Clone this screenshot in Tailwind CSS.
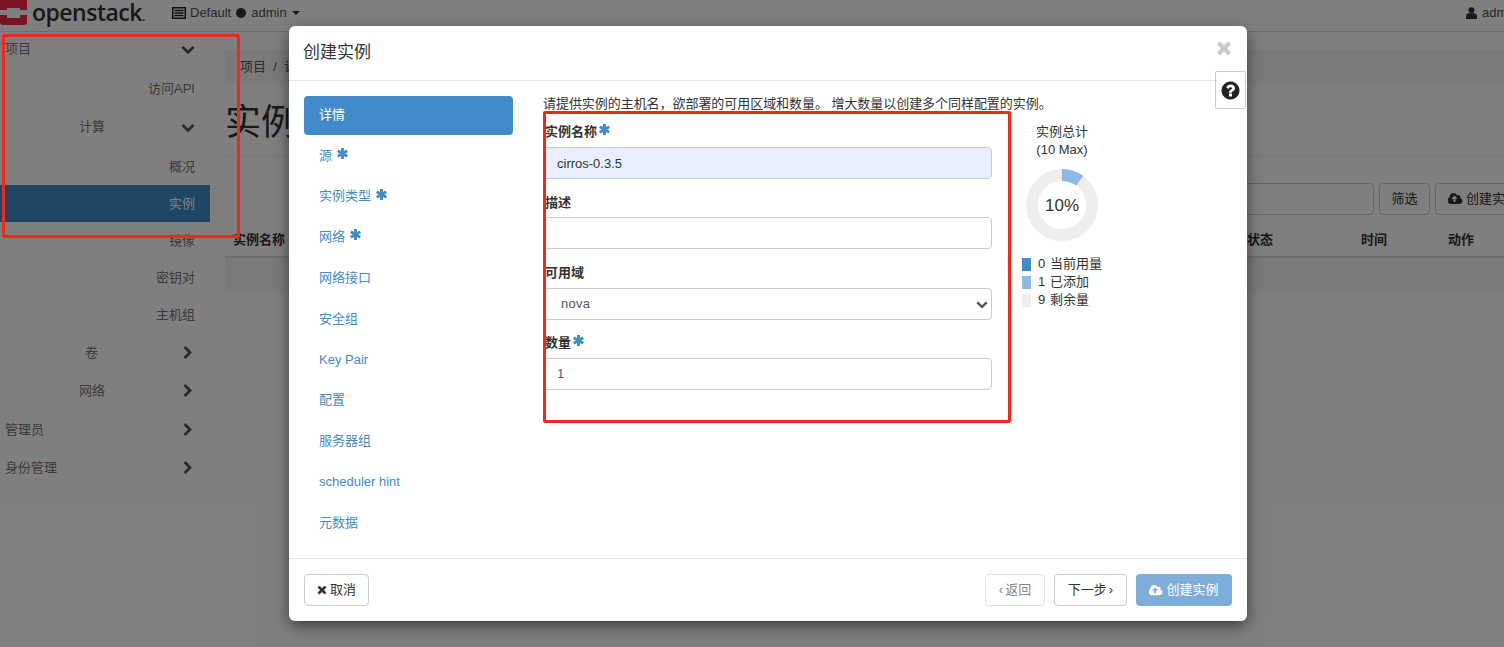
<!DOCTYPE html>
<html lang="en">
<head>
    <meta charset="UTF-8">
    <title>创建实例</title>
    <script src="https://cdn.jsdelivr.net/npm/@tailwindcss/browser@4"></script>
</head>
<body class="bg-white text-[#333] font-['Liberation_Sans','Noto_Sans_CJK_SC',sans-serif] text-[13px]">

<svg class="hidden">
    <symbol id="chev-down" viewBox="0 0 1792 1792"><path d="M1683 808l-742 741q-19 19-45 19t-45-19l-742-741q-19-19-19-45.5t19-45.5l166-165q19-19 45-19t45 19l531 531 531-531q19-19 45-19t45 19l166 165q19 19 19 45.5t-19 45.5z"/></symbol>
    <symbol id="chev-right" viewBox="0 0 1792 1792"><path d="M1363 877l-742 742q-19 19-45 19t-45-19l-166-166q-19-19-19-45t19-45l531-531-531-531q-19-19-19-45t19-45l166-166q19-19 45-19t45 19l742 742q19 19 19 45t-19 45z"/></symbol>
    <symbol id="cloud" viewBox="0 0 1920 1792"><path d="M1216 864q0-14-9-23l-352-352q-9-9-23-9t-23 9l-351 351q-10 12-10 24 0 14 9 23t23 9h224v352q0 13 9.5 22.5t22.5 9.5h192q13 0 22.5-9.5t9.5-22.5v-352h224q13 0 22.5-9.5t9.5-22.5zm640 288q0 159-112.5 271.5t-271.5 112.5h-1088q-185 0-316.5-131.5t-131.5-316.5q0-130 70-240t188-165q-2-30-2-43 0-212 150-362t362-150q156 0 285.5 87t188.5 231q71-62 166-62 106 0 181 75t75 181q0 76-41 138 130 31 213.5 135.5t83.5 238.5z"/></symbol>
    <symbol id="times" viewBox="0 0 1408 1792"><path d="M1298 1202q0 40-28 68l-136 136q-28 28-68 28t-68-28l-294-294-294 294q-28 28-68 28t-68-28l-136-136q-28-28-28-68t28-68l294-294-294-294q-28-28-28-68t28-68l136-136q28-28 68-28t68 28l294 294 294-294q28-28 68-28t68 28l136 136q28 28 28 68t-28 68l-294 294 294 294q28 28 28 68z"/></symbol>
    <symbol id="star" viewBox="0 0 12 12"><path d="M6 0v12M.8 3l10.4 6M11.200 3L.8 9" stroke="#428bca" stroke-width="3.2" fill="none"/></symbol>
</svg>

<div class="relative w-[1504px] h-[647px] overflow-hidden">

    <!-- page behind the dialog -->
    <div class="h-[32px] border-b border-[#ddd] bg-white flex items-center overflow-hidden">
        <svg class="w-[27px] h-[25px] -mt-[7px] shrink-0" viewBox="0 0 27 25">
            <path fill="#f4284a" d="M3 -6h21a3 3 0 0 1 3 3v13h-7V8H7v2H0V-3a3 3 0 0 1 3-3zM0 15h7v3h13v-3h7v7a3 3 0 0 1-3 3H3a3 3 0 0 1-3-3z"/>
        </svg>
        <span class="ml-[5px] w-[140px] -mt-[7px] font-['Open_Sans'] font-semibold text-[23px] leading-none text-[#333] tracking-[-0.5px]">openstack<span class="text-[12px]">.</span></span>
        <svg class="w-[14px] h-[12px] mr-[4px] -mt-[6px]" viewBox="0 0 14 12"><path fill="none" stroke="#222" stroke-width="1.5" d="M.75.75h12.500v10.500H.75z"/><path stroke="#222" stroke-width="1.400" d="M2.500 3.500h9M2.500 6h9M2.500 8.500h9"/></svg>
        <span class="-mt-[6px] text-[#555]">Default</span>
        <span class="-mt-[6px] ml-[5px] w-[10px] h-[10px] rounded-full bg-[#333]"></span>
        <span class="-mt-[6px] ml-[5px] text-[#555]">admin</span>
        <span class="-mt-[6px] ml-[5px] border-x-[4px] border-x-transparent border-t-[4px] border-t-[#333]"></span>
        <span class="-mt-[6px] ml-auto w-[38px] overflow-hidden whitespace-nowrap text-[#555] flex items-center gap-[5px]">
            <svg class="w-[11px] h-[12px] shrink-0 fill-[#333]" viewBox="0 0 11 12"><circle cx="5.500" cy="3.200" r="3"/><path d="M0 12V9.500C0 7.500 1.500 6.300 3 6.300h5c1.500 0 3 1.200 3 3.200V12z"/></svg>admin</span>
    </div>

    <div class="flex">
        <!-- sidebar -->
        <nav class="w-[210px] shrink-0 text-[#777]">
            <div class="h-[38px] -mt-[2px] pl-[5px] pr-[15px] flex items-center justify-between"><span>项目</span><svg class="w-[14px] h-[14px] fill-[#555]"><use href="#chev-down"/></svg></div>
            <div class="h-[38px] mt-[2px] pr-[15px] flex items-center justify-end">访问API</div>
            <div class="h-[38px] pl-[79px] pr-[15px] flex items-center justify-between"><span>计算</span><svg class="w-[14px] h-[14px] fill-[#555]"><use href="#chev-down"/></svg></div>
            <div class="h-[37px] mt-[2px] pr-[15px] flex items-center justify-end">概况</div>
            <div class="h-[37px] pr-[15px] flex items-center justify-end bg-[#3f8cc9] text-white">实例</div>
            <div class="h-[37px] pr-[15px] flex items-center justify-end">镜像</div>
            <div class="h-[37px] pr-[15px] flex items-center justify-end">密钥对</div>
            <div class="h-[37px] pr-[15px] flex items-center justify-end">主机组</div>
            <div class="h-[38px] mt-[1px] pl-[85px] pr-[15px] flex items-center justify-between"><span>卷</span><svg class="w-[14px] h-[14px] fill-[#555]"><use href="#chev-right"/></svg></div>
            <div class="h-[38px] pl-[79px] pr-[15px] flex items-center justify-between"><span>网络</span><svg class="w-[14px] h-[14px] fill-[#555]"><use href="#chev-right"/></svg></div>
            <div class="h-[38px] mt-[1px] pl-[5px] pr-[15px] flex items-center justify-between"><span>管理员</span><svg class="w-[14px] h-[14px] fill-[#555]"><use href="#chev-right"/></svg></div>
            <div class="h-[38px] pl-[5px] pr-[15px] flex items-center justify-between"><span>身份管理</span><svg class="w-[14px] h-[14px] fill-[#555]"><use href="#chev-right"/></svg></div>
        </nav>

        <!-- main content -->
        <main class="flex-1 pl-[15px] pt-[18px]">
            <div class="h-[33px] bg-[#f5f5f5] pl-[15px] flex items-center text-[#555]">项目&nbsp;&nbsp;/&nbsp;&nbsp;计算</div>
            <h1 class="mt-[16px] h-[58px] border-b border-[#eee] text-[36px] leading-[48px] font-normal text-[#333]">实例</h1>
            <div class="mt-[26px] flex justify-end gap-[5px] -mr-[40px]">
                <div class="w-[400px] h-[32px] border border-[#ccc] rounded-[4px]"></div>
                <div class="w-[51px] h-[32px] border border-[#ccc] rounded-[4px] flex items-center justify-center">筛选</div>
                <div class="w-[109px] h-[32px] border border-[#ccc] rounded-[4px] flex items-center pl-[12px] gap-[3px] whitespace-nowrap"><svg class="w-[15px] h-[14px] fill-[#333]"><use href="#cloud"/></svg>创建实例</div>
            </div>
            <div class="mt-[8px] h-[35px] border-b-2 border-[#ddd] grid grid-cols-[1014px_114px_87px_1fr] items-center font-bold pl-[8px]">
                <span>实例名称</span><span>状态</span><span>时间</span><span>动作</span>
            </div>
            <div class="h-[33px] bg-[#f5f5f5]"></div>
        </main>
    </div>

    <!-- backdrop -->
    <div class="absolute inset-0 bg-black/50"></div>

    <!-- dialog -->
    <div class="absolute left-[289px] top-[26px] w-[958px] h-[595px] bg-white rounded-[6px] shadow-[0_5px_15px_rgba(0,0,0,0.5)] flex flex-col">
        <div class="h-[55px] shrink-0 border-b border-[#e5e5e5] pl-[14px] pr-[15px] flex items-center justify-between">
            <h4 class="text-[17px] text-[#333] font-normal">创建实例</h4>
            <svg class="w-[16px] h-[20px] -mt-[8px] fill-[#c9c9c9]"><use href="#times"/></svg>
        </div>

        <div class="flex-1 flex pt-[15px] pl-[15px] relative">
            <!-- wizard steps -->
            <ul class="w-[209px] shrink-0 flex flex-col gap-[1.8px] text-[#428bca]">
                <li class="h-[39px] pl-[15px] pb-[2px] flex items-center rounded-[4px] bg-[#428bca] text-white">详情</li>
                <li class="h-[39px] pl-[15px] pb-[2px] flex items-center gap-[4.5px]">源 <svg class="w-[11px] h-[11px] -mt-[4px]"><use href="#star"/></svg></li>
                <li class="h-[39px] pl-[15px] pb-[2px] flex items-center gap-[4.5px]">实例类型 <svg class="w-[11px] h-[11px] -mt-[4px]"><use href="#star"/></svg></li>
                <li class="h-[39px] pl-[15px] pb-[2px] flex items-center gap-[4.5px]">网络 <svg class="w-[11px] h-[11px] -mt-[4px]"><use href="#star"/></svg></li>
                <li class="h-[39px] pl-[15px] pb-[2px] flex items-center">网络接口</li>
                <li class="h-[39px] pl-[15px] pb-[2px] flex items-center">安全组</li>
                <li class="h-[39px] pl-[15px] pb-[2px] flex items-center">Key Pair</li>
                <li class="h-[39px] pl-[15px] pb-[2px] flex items-center">配置</li>
                <li class="h-[39px] pl-[15px] pb-[2px] flex items-center">服务器组</li>
                <li class="h-[39px] pl-[15px] pb-[2px] flex items-center">scheduler hint</li>
                <li class="h-[39px] pl-[15px] pb-[2px] flex items-center">元数据</li>
            </ul>

            <div class="ml-[30px] w-[690px]">
                <p class="h-[17px] leading-[17px] text-[#333] tracking-[-0.05px] -mt-[1px] whitespace-nowrap">请提供实例的主机名，欲部署的可用区域和数量。 增大数量以创建多个同样配置的实例。</p>
                <div class="flex mt-[10px]">
                    <!-- form -->
                    <form class="w-[449px] shrink-0">
                        <label class="h-[20px] mb-[5px] pl-[2px] flex items-center gap-[2px] font-bold">实例名称 <svg class="w-[11px] h-[11px] -mt-[5px]"><use href="#star"/></svg></label>
                        <input type="text" value="cirros-0.3.5" class="block w-full h-[32px] px-[13px] text-[#333] bg-[#e8f0fe] border border-[#ccc] rounded-[4px]">
                        <label class="mt-[13.3px] h-[20px] mb-[5px] pl-[2px] flex items-center font-bold">描述</label>
                        <input type="text" class="block w-full h-[32px] px-[13px] border border-[#ccc] rounded-[4px]">
                        <label class="mt-[13.3px] h-[20px] mb-[5px] pl-[2px] flex items-center font-bold">可用域</label>
                        <div class="relative">
                            <div class="h-[32px] pl-[17px] flex items-center text-[#555] tracking-[0.3px] border border-[#ccc] rounded-[4px]">nova</div>
                            <svg class="absolute right-[4px] top-[10px] w-[12px] h-[12px] fill-[#555]"><use href="#chev-down"/></svg>
                        </div>
                        <label class="mt-[13.3px] h-[20px] mb-[5px] pl-[2px] flex items-center gap-[2px] font-bold">数量 <svg class="w-[11px] h-[11px] -mt-[5px]"><use href="#star"/></svg></label>
                        <input type="text" value="1" class="block w-full h-[32px] px-[13px] text-[#555] border border-[#ccc] rounded-[4px]">
                    </form>

                    <!-- quota -->
                    <div class="ml-[30px] w-[90px] text-[#333]">
                        <div class="w-[80px] text-center leading-[18px] pt-[1px]">实例总计<br>(10 Max)</div>
                        <div class="relative w-[72px] h-[72px] ml-[4px] mt-[10px]">
                            <svg viewBox="0 0 72 72" class="w-[72px] h-[72px] -rotate-90">
                                <circle cx="36" cy="36" r="30" fill="none" stroke="#eeeeee" stroke-width="12"/>
                                <circle cx="36" cy="36" r="30" fill="none" stroke="#8eb9e2" stroke-width="12" stroke-dasharray="18.85 170"/>
                            </svg>
                            <div class="absolute inset-0 pt-[1px] flex items-center justify-center text-[17px]">10%</div>
                        </div>
                        <div class="mt-[14px] leading-[18px] w-[100px]">
                            <div class="flex items-center h-[18px]"><span class="w-[9px] h-[13px] bg-[#428bca] mr-[7px]"></span><span class="w-[12px]">0</span>当前用量</div>
                            <div class="flex items-center h-[18px]"><span class="w-[9px] h-[13px] bg-[#8eb9e2] mr-[7px]"></span><span class="w-[12px]">1</span>已添加</div>
                            <div class="flex items-center h-[18px]"><span class="w-[9px] h-[13px] bg-[#eeeeee] mr-[7px]"></span><span class="w-[12px]">9</span>剩余量</div>
                        </div>
                    </div>
                </div>
            </div>

            <!-- help tab over the dialog edge -->
            <div class="absolute right-[1px] -top-[10px] w-[31px] h-[38px] bg-white border border-[#ccc] rounded-[2px] flex items-center justify-center">
                <svg class="w-[21px] h-[21px] fill-[#222]" viewBox="0 0 1792 1792"><path d="M1024 1376v-192q0-14-9-23t-23-9h-192q-14 0-23 9t-9 23v192q0 14 9 23t23 9h192q14 0 23-9t9-23zm256-672q0-88-55.5-163t-138.5-116-170-41q-243 0-371 213-15 24 8 42l132 100q7 6 19 6 16 0 25-12 53-68 86-92 34-24 86-24 48 0 85.5 26t37.5 59q0 38-20 61t-68 45q-63 28-115.5 86.5t-52.5 125.5v36q0 14 9 23t23 9h192q14 0 23-9t9-23q0-19 21.5-49.5t54.5-49.5q32-18 49-28.5t46-35 44.5-48 28-60.5 12.5-81zm384 192q0 209-103 385.5t-279.5 279.5-385.5 103-385.5-103-279.5-279.5-103-385.5 103-385.5 279.5-279.5 385.5-103 385.5 103 279.5 279.5 103 385.5z"/></svg>
            </div>
        </div>

        <div class="h-[63px] shrink-0 border-t border-[#e5e5e5] pb-[2px] px-[15px] flex items-center">
            <button class="h-[32px] w-[65px] mt-[2px] border border-[#ccc] rounded-[4px] flex items-center justify-center gap-[3px] text-[#333]"><svg class="w-[10px] h-[13px] fill-[#333]"><use href="#times"/></svg>取消</button>
            <button class="ml-auto h-[32px] w-[60px] mt-[2px] border border-[#ccc] rounded-[4px] flex items-center justify-center gap-[2px] text-[#333] opacity-60"><span>&lsaquo;</span>返回</button>
            <button class="ml-[9px] h-[32px] w-[73px] mt-[2px] border border-[#ccc] rounded-[4px] flex items-center justify-center gap-[2px] text-[#333]">下一步<span>&rsaquo;</span></button>
            <button class="ml-[9px] h-[32px] w-[96px] mt-[2px] rounded-[4px] bg-[#7fadd9] flex items-center justify-center gap-[3px] text-white"><svg class="w-[14px] h-[13px] fill-white"><use href="#cloud"/></svg>创建实例</button>
        </div>
    </div>

    <!-- red annotation boxes drawn over the screenshot -->
    <div class="absolute left-[2px] top-[34px] w-[238px] h-[204px] border-[3px] border-[#ee2a1e] rounded-[2px]"></div>
    <div class="absolute left-[543px] top-[111px] w-[468px] h-[312px] border-[3px] border-[#ee2a1e] rounded-[2px]"></div>
</div>

</body>
</html>
